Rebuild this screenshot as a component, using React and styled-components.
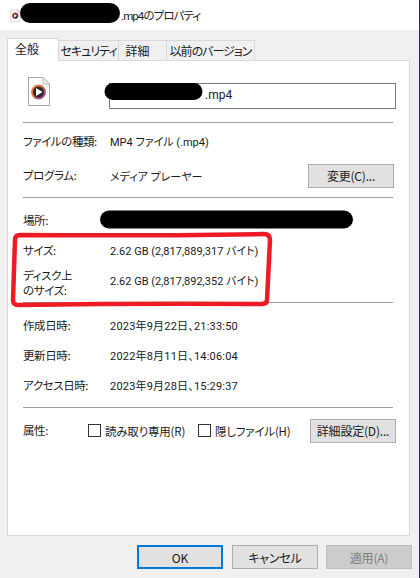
import React from "react";
import styled, { createGlobalStyle } from "styled-components";

const Global = createGlobalStyle`
  html, body { margin: 0; padding: 0; width: 420px; height: 578px; overflow: hidden; background: #f0f0f0; }
  * { box-sizing: border-box; }
`;
const Win = styled.div`
  position: relative; width: 420px; height: 578px; background: #f0f0f0; overflow: hidden;
  border-right: 1px solid #1c2f5a;
  font-family: "Noto Sans CJK JP", "Liberation Sans", sans-serif; font-size: 12px; color: #1a1a1a;
  font-feature-settings: "palt";
`;
const TitleBar = styled.div`
  height: 30px; background: #fff; display: flex; align-items: center; padding-left: 10px; gap: 100px;
`;
const TitleText = styled.span`
  font-family: Roboto, "Noto Sans CJK JP", sans-serif; font-size: 11.5px; letter-spacing: -0.9px; color: #222;
`;
const Tabs = styled.div`
  display: flex; align-items: flex-end; height: 30px; padding: 8px 0 0 7px; position: relative; z-index: 1;
`;
const Tab = styled.div`
  height: ${p => p.$active ? "23px" : "20px"};
  width: ${p => p.$w}px;
  background: ${p => p.$active ? "#fff" : "#f0f0f0"};
  border: 1px solid #d9d9d9;
  border-left-width: ${p => p.$active ? 1 : 0}px;
  border-bottom: 0;
  display: flex; align-items: center; justify-content: center; font-size: 12px; white-space: nowrap;
  letter-spacing: ${p => p.$ls || 0}px;
  margin-bottom: ${p => p.$active ? "-1px" : "0"};
  padding-bottom: ${p => p.$active ? "4px" : "0"};
  padding-right: ${p => p.$pr || 0}px;
`;
const Panel = styled.div`
  margin: 0 9px 0 7px; height: 476px; background: #fff; border: 1px solid #d9d9d9;
  padding: 16px 0 0 15px;
`;
const NameRow = styled.div`display: flex; align-items: flex-start; height: 45px;`;
const BigIcon = styled.svg`
  width: ${p => p.$small ? 11 : 22}px; height: ${p => p.$small ? 13 : 29}px;
  margin-left: ${p => p.$small ? 0 : 5}px; flex: none;
`;
const NameInput = styled.div`
  margin: 6px 0 0 59px; width: 287px; height: 26px; border: 1px solid #7a7a7a;
  padding-left: 95px; line-height: 23px; font-family: Roboto, "Liberation Sans", sans-serif; font-size: 12px;
`;
const Sep = styled.div`height: 1px; width: 370px; background: #a0a0a0;`;
const Row = styled.div`
  display: flex; align-items: center; height: ${p => p.$h}px; padding-bottom: ${p => p.$pb || 0}px;
`;
const DateGroup = styled.div`display: flex; flex-direction: column; gap: 14px; padding: 14px 0;`;
const Label = styled.div`
  width: 87px; flex: none; font-size: 11.5px; letter-spacing: -0.4px; line-height: 15px; margin-top: ${p => p.$mt || 0}px;
`;
const Value = styled.div`
  font-family: Roboto, "Noto Sans CJK JP", sans-serif; font-size: 11px; letter-spacing: ${p => p.$ls || 0}px;
  white-space: nowrap; flex: 1;
`;
const Btn = styled.div`
  width: 86px; height: 24px; background: ${p => p.$disabled ? "#cccccc" : "#e1e1e1"};
  border: ${p => p.$focus ? "2px solid #0078d7" : `1px solid ${p.$disabled ? "#bfbfbf" : "#adadad"}`};
  color: ${p => p.$disabled ? "#7f7f7f" : "#1a1a1a"};
  display: flex; align-items: center; justify-content: center; font-size: 12px; letter-spacing: -0.2px; flex: none;
  margin-right: ${p => p.$mr || 0}px; white-space: nowrap;
`;
const Check = styled.label`
  display: flex; align-items: center; gap: 4px; font-size: 11.5px; letter-spacing: -0.2px; white-space: nowrap;
`;
const Box = styled.span`display: block; width: 13px; height: 13px; background: #fff; border: 1px solid #333;`;
const Attr = styled.div`display: flex; align-items: center; flex: 1; gap: 13px; margin-left: -22px;`;
const Footer = styled.div`display: flex; justify-content: flex-end; gap: 8px; padding: 9px 7px 0 0;`;
const Overlay = styled.svg`position: absolute; left: 0; top: 0; width: 420px; height: 578px; pointer-events: none;`;

const FileIcon = ({ small }) => (
  <BigIcon $small={small} viewBox="0 0 22 29">
    <defs>
      <linearGradient id="rim" x1="0" y1="0" x2="1" y2="1">
        <stop offset="0" stopColor="#f08a2c" />
        <stop offset="0.55" stopColor="#d8604a" />
        <stop offset="1" stopColor="#7a3fc0" />
      </linearGradient>
    </defs>
    <path d="M.5.5H15L21.5 7V28.5H.5Z" fill="#fff" stroke="#a6a6a6" />
    <path d="M15 .5V7H21.5Z" fill="#eee" stroke="#bbb" />
    <circle cx="10.5" cy="15" r="6.5" fill="#2a2a2a" stroke="url(#rim)" strokeWidth="2" />
    <path d="M8 11L14.5 15L8 19Z" fill="#fff" />
  </BigIcon>
);

export default function App() {
  return (
    <Win>
      <Global />
      <TitleBar>
        <FileIcon small />
        <TitleText>.mp4のプロパティ</TitleText>
      </TitleBar>
      <Tabs>
        <Tab $active $w={52} $pr={12}>全般</Tab>
        <Tab $w={60} $ls={-1}>セキュリティ</Tab>
        <Tab $w={48} $pr={10}>詳細</Tab>
        <Tab $w={88} $ls={-1}>以前のバージョン</Tab>
      </Tabs>
      <Panel>
        <NameRow>
          <FileIcon />
          <NameInput>.mp4</NameInput>
        </NameRow>
        <Sep />
        <Row $h={36}><Label>ファイルの種類:</Label><Value>MP4 ファイル (.mp4)</Value></Row>
        <Row $h={38} $pb={5}><Label>プログラム:</Label><Value>メディア プレーヤー</Value><Btn $mr={15}>変更(C)...</Btn></Row>
        <Sep />
        <Row $h={44}><Label>場所:</Label></Row>
        <Row $h={16}><Label>サイズ:</Label><Value>2.62 GB (2,817,889,317 バイト)</Value></Row>
        <Row $h={44}><Label $mt={6}>ディスク上<br />のサイズ:</Label><Value>2.62 GB (2,817,892,352 バイト)</Value></Row>
        <Sep />
        <DateGroup>
          <Row $h={16}><Label>作成日時:</Label><Value $ls={0.2}>2023年9月22日、21:33:50</Value></Row>
          <Row $h={16}><Label>更新日時:</Label><Value $ls={0.2}>2022年8月11日、14:06:04</Value></Row>
          <Row $h={16}><Label>アクセス日時:</Label><Value $ls={0.2}>2023年9月28日、15:29:37</Value></Row>
        </DateGroup>
        <Sep />
        <Row $h={45}>
          <Label>属性:</Label>
          <Attr>
            <Check><Box />読み取り専用(R)</Check>
            <Check><Box />隠しファイル(H)</Check>
          </Attr>
          <Btn $mr={13}>詳細設定(D)...</Btn>
        </Row>
      </Panel>
      <Footer>
        <Btn $focus $mr={1}>OK</Btn>
        <Btn>キャンセル</Btn>
        <Btn $disabled>適用(A)</Btn>
      </Footer>
      <Overlay viewBox="0 0 420 578">
        <path d="M30 13H110" stroke="#000" strokeWidth="20" strokeLinecap="round" />
        <path d="M113 91.5H194" stroke="#000" strokeWidth="17" strokeLinecap="round" />
        <path d="M109 219.5H344" stroke="#000" strokeWidth="18" strokeLinecap="round" />
        <path d="M20 235Q140 236 264 234Q270 234 270 240L267 300Q267 304 262 304Q140 303 18 305Q13 305 13 300Q14 270 15 240Q15 235 20 235Z" fill="none" stroke="#ed1c24" strokeWidth="4.5" strokeLinejoin="round" />
      </Overlay>
    </Win>
  );
}
